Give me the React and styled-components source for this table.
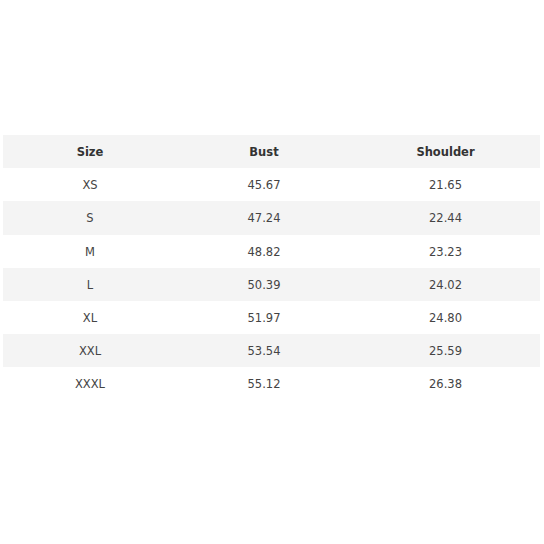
import React from 'react';
import styled, { createGlobalStyle } from 'styled-components';

const GlobalStyle = createGlobalStyle`
  html, body {
    margin: 0;
    padding: 0;
    background: #fff;
  }
  body {
    font-family: 'DejaVu Sans', Verdana, sans-serif;
  }
`;

const rows = [
  { size: 'XS', bust: '45.67', shoulder: '21.65' },
  { size: 'S', bust: '47.24', shoulder: '22.44' },
  { size: 'M', bust: '48.82', shoulder: '23.23' },
  { size: 'L', bust: '50.39', shoulder: '24.02' },
  { size: 'XL', bust: '51.97', shoulder: '24.80' },
  { size: 'XXL', bust: '53.54', shoulder: '25.59' },
  { size: 'XXXL', bust: '55.12', shoulder: '26.38' },
];

const Page = styled.div`
  width: 544px;
  height: 544px;
  padding: 135px 4px 0 3px;
  box-sizing: border-box;
`;

const Table = styled.div`
  display: flex;
  flex-direction: column;
`;

const Row = styled.div`
  display: grid;
  grid-template-columns: 174px 174px 1fr;
  height: 33.2px;
  align-items: center;
  background: ${(p) => (p.$shaded ? '#f4f4f4' : '#fff')};
`;

const Cell = styled.div`
  text-align: center;
  font-size: 11.5px;
  padding-top: 1px;
  color: ${(p) => (p.$head ? '#333' : '#444')};
  font-weight: ${(p) => (p.$head ? 700 : 400)};
`;

const App = () => (
  <>
    <GlobalStyle />
    <Page>
      <Table>
        <Row $shaded>
          <Cell $head>Size</Cell>
          <Cell $head>Bust</Cell>
          <Cell $head>Shoulder</Cell>
        </Row>
        {rows.map((r, i) => (
          <Row key={r.size} $shaded={i % 2 === 1}>
            <Cell>{r.size}</Cell>
            <Cell>{r.bust}</Cell>
            <Cell>{r.shoulder}</Cell>
          </Row>
        ))}
      </Table>
    </Page>
  </>
);

export default App;
